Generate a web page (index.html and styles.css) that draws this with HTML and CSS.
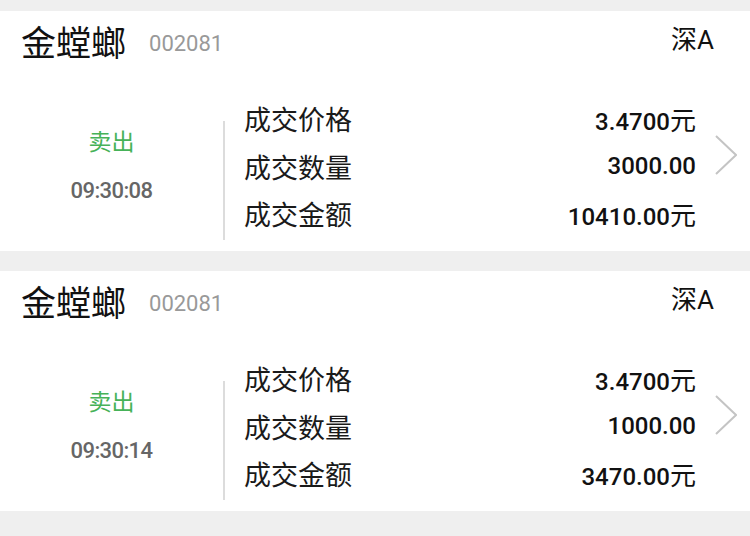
FILE: index.html
```html
<!DOCTYPE html>
<html lang="zh-CN">
<head>
<meta charset="utf-8">
<link rel="stylesheet" href="styles.css">
</head>
<body>
<div class="list">
  <div class="card">
    <div class="head">
      <span class="name">金螳螂</span><span class="code">002081</span><span class="market">深A</span>
    </div>
    <div class="body">
      <div class="side"><div class="dir">卖出</div><div class="time">09:30:08</div></div>
      <div class="rule"></div>
      <div class="info">
        <div class="row"><span class="label">成交价格</span><span class="val">3.4700<span class="unit">元</span></span></div>
        <div class="row"><span class="label">成交数量</span><span class="val">3000.00</span></div>
        <div class="row"><span class="label">成交金额</span><span class="val">10410.00<span class="unit">元</span></span></div>
      </div>
      <svg class="chev" width="22" height="40" viewBox="0 0 22 40"><polyline points="1,1 21,20 1,39" fill="none" stroke="#c4c4c4" stroke-width="2"/></svg>
    </div>
  </div>
  <div class="card">
    <div class="head">
      <span class="name">金螳螂</span><span class="code">002081</span><span class="market">深A</span>
    </div>
    <div class="body">
      <div class="side"><div class="dir">卖出</div><div class="time">09:30:14</div></div>
      <div class="rule"></div>
      <div class="info">
        <div class="row"><span class="label">成交价格</span><span class="val">3.4700<span class="unit">元</span></span></div>
        <div class="row"><span class="label">成交数量</span><span class="val">1000.00</span></div>
        <div class="row"><span class="label">成交金额</span><span class="val">3470.00<span class="unit">元</span></span></div>
      </div>
      <svg class="chev" width="22" height="40" viewBox="0 0 22 40"><polyline points="1,1 21,20 1,39" fill="none" stroke="#c4c4c4" stroke-width="2"/></svg>
    </div>
  </div>
</div>
</body>
</html>
```

FILE: styles.css
```css
html, body {
  margin: 0;
  padding: 0;
  background: #efefef;
  font-family: Roboto, "Noto Sans CJK SC", sans-serif;
}
.list {
  padding-top: 11px;
  display: flex;
  flex-direction: column;
  gap: 20px;
}
.card {
  background: #fff;
  height: 240px;
  box-sizing: border-box;
  padding-bottom: 11px;
  display: flex;
  flex-direction: column;
}
.head {
  height: 58px;
  display: flex;
  align-items: center;
  padding: 0 36px 0 21px;
  margin-bottom: 28px;
}
.name {
  font-family: "Noto Sans CJK SC", sans-serif;
  font-size: 35px;
  color: #111;
  line-height: 1;
}
.code {
  font-size: 22px;
  color: #999;
  margin-left: 23px;
  margin-top: 8px;
  line-height: 1;
}
.market {
  margin-left: auto;
  font-size: 26px;
  color: #111;
  line-height: 1;
}
.body {
  height: 143px;
  display: flex;
}
.side {
  width: 223px;
  padding-top: 22px;
  text-align: center;
}
.dir {
  height: 48px;
  line-height: 48px;
  font-size: 23px;
  color: #46b258;
}
.time {
  height: 48px;
  line-height: 48px;
  font-size: 22px;
  font-weight: 500;
  color: #666;
  letter-spacing: -0.6px;
}
.rule {
  width: 2px;
  height: 119px;
  margin-top: 24px;
  background: #dcdcdc;
}
.info {
  flex: 1;
  padding-left: 19px;
  margin-top: -2px;
  display: flex;
  flex-direction: column;
}
.row {
  height: 47.5px;
  display: flex;
  align-items: center;
  justify-content: space-between;
}
.label {
  font-family: "Noto Sans CJK SC", sans-serif;
  font-size: 27px;
  color: #1a1a1a;
}
.val {
  font-size: 24px;
  font-weight: 500;
  color: #111;
}
.unit {
  font-family: "Noto Sans CJK SC", sans-serif;
  font-size: 26px;
  font-weight: 400;
}
.chev {
  flex: none;
  margin: 38px 13px 0 19px;
}
```
